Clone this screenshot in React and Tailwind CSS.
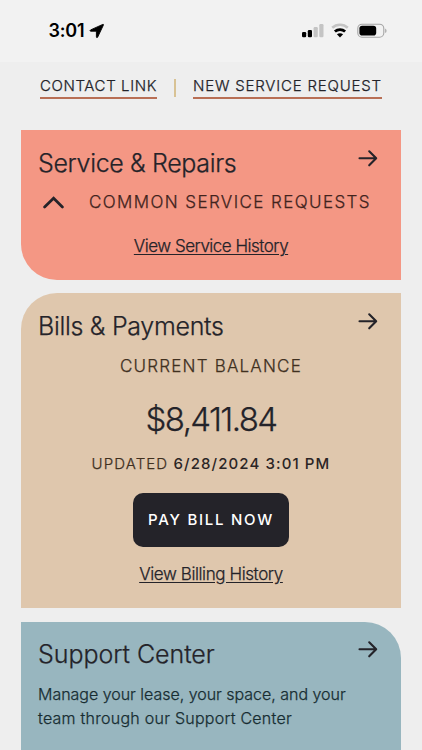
import React from 'react';

const ArrowIcon = () => (
  <svg className="mt-[2px] h-[18px] w-5" viewBox="0 0 20 18" fill="none" stroke="#242329" strokeWidth="2.1" strokeLinecap="round" strokeLinejoin="round">
    <path d="M1.5 9.3H18M11.2 2.3L18.2 9.3L11.2 16.3" />
  </svg>
);

const StatusBar = () => (
  <div className="flex h-[62px] items-start justify-between bg-[#f2f2f2] pl-[48.5px] pr-[34px] text-black">
    <div className="flex pt-[19px]">
      <span className="w-[36px] whitespace-nowrap text-[18px] font-semibold leading-6 tracking-[-0.2px] [-webkit-text-stroke:0px]">3:01</span>
      <svg className="ml-[4px] mt-[4px] h-[16px] w-[16px]" viewBox="0 0 16 16">
        <path
          d="M13.8 1.4L1.6 6.9C.8 7.4 1 8.2 1.8 8.2H7.4V13.8C7.4 14.8 8.3 14.9 8.7 14.1L14.4 2.1C14.6 1.4 14.3 1.2 13.8 1.4Z"
          stroke="#000"
          strokeWidth="0.9"
          strokeLinejoin="round"
        />
      </svg>
    </div>
    <div className="flex items-start pt-[23px]">
      <svg className="h-[16px] w-[22px]" viewBox="0 0 22 16">
        <rect x="0" y="9" width="4.2" height="5.3" rx="1.2" />
        <rect x="5.8" y="7" width="4.2" height="7.3" rx="1.2" />
        <rect x="11.6" y="4" width="4.2" height="10.3" rx="1.2" fill="#c4c4c4" />
        <rect x="17.3" y="1" width="4.2" height="13.3" rx="1.2" fill="#c4c4c4" />
      </svg>
      <svg className="ml-[7px] h-[16px] w-[18px]" viewBox="0 0 18 16" fill="none">
        <path d="M1.2 4.8C5.6.8 12.4.8 16.8 4.8" stroke="#c4c4c4" strokeWidth="2.6" />
        <path d="M3.9 8.5C6.8 5.9 11.2 5.9 14.1 8.5" stroke="#000" strokeWidth="2.8" />
        <path d="M9 14.5L5.9 11.3C7.6 9.9 10.4 9.9 12.1 11.3Z" fill="#000" />
      </svg>
      <svg className="ml-[8px] h-[16px] w-[31px]" viewBox="0 0 31 16">
        <rect x="0.8" y="1.2" width="26" height="13" rx="4.2" fill="none" stroke="#a5a5a5" strokeWidth="1.1" />
        <rect x="2.4" y="2.8" width="16.8" height="9.8" rx="2.8" />
        <path d="M28.2 5.4C30 6.2 30 9.2 28.2 10Z" fill="#a5a5a5" />
      </svg>
    </div>
  </div>
);

const QuickLinks = () => (
  <nav className="flex h-[68px] items-start pl-[40px] pt-[14px] text-[15px] leading-5">
    <a className="h-[23px] w-[117px] whitespace-nowrap border-b-2 border-[#b86f55] tracking-[0.6px]">CONTACT LINK</a>
    <span className="ml-[17px] mt-[3px] h-[18px] w-[2px] bg-[#d8c294]" />
    <a className="ml-[17px] h-[23px] w-[189px] whitespace-nowrap border-b-2 border-[#b86f55] tracking-[0.8px]">NEW SERVICE REQUEST</a>
  </nav>
);

const CardHeader = ({ title, spacing }) => (
  <div className="flex h-8 items-start justify-between pl-[17px] pr-[23px]">
    <h2 className={`whitespace-nowrap text-[25px] leading-8 ${spacing}`}>{title}</h2>
    <ArrowIcon />
  </div>
);

const ServiceCard = () => (
  <section className="h-[150px] rounded-bl-[36px] bg-[#f49784] pt-[16.5px]">
    <CardHeader title="Service & Repairs" spacing="tracking-[-0.35px]" />
    <div className="mt-[11.5px] flex h-6 items-center pl-[21px]">
      <svg className="h-[14px] w-[22px]" viewBox="0 0 22 14" fill="none" stroke="#242329" strokeWidth="2.7" strokeLinecap="round">
        <path d="M2.6 12L11.6 3.2L20.4 12" />
      </svg>
      <span className="ml-[25px] whitespace-nowrap text-[17px] leading-6 tracking-[1.4px] text-[#41231d]">COMMON SERVICE REQUESTS</span>
    </div>
    <div className="mt-[20px] text-center">
      <a className="text-[17px] leading-6 tracking-[-0.5px] underline underline-offset-2">View Service History</a>
    </div>
  </section>
);

const BillsCard = () => (
  <section className="mt-[13px] flex h-[315px] flex-col items-center rounded-tl-[36px] bg-[#dfc7ad] pt-[16.5px]">
    <div className="w-full">
      <CardHeader title="Bills & Payments" spacing="tracking-[-0.3px]" />
    </div>
    <p className="mt-[12.5px] whitespace-nowrap text-[17px] leading-6 tracking-[1.2px] text-[#40301f]">CURRENT BALANCE</p>
    <p className="mt-[21px] whitespace-nowrap text-[33px] leading-10 tracking-[-1.6px]">$8,411.84</p>
    <p className="mt-[15px] whitespace-nowrap text-[15px] leading-5 tracking-[1.1px] text-[#40301f]">
      UPDATED <span className="font-medium text-[#2b2525] [-webkit-text-stroke:0px]">6/28/2024 3:01 PM</span>
    </p>
    <button type="button" className="mt-[19px] h-[53.5px] w-[156px] shrink-0 whitespace-nowrap rounded-[10px] bg-[#242329] text-[15px] font-medium leading-5 tracking-[1.75px] text-white [-webkit-text-stroke:0px]">
      PAY BILL NOW
    </button>
    <a className="mt-[15.5px] whitespace-nowrap text-[17px] leading-6 tracking-[-0.4px] underline underline-offset-2">View Billing History</a>
  </section>
);

const SupportCard = () => (
  <section className="mt-[13.5px] h-[129px] rounded-tr-[36px] bg-[#98b6bf] pt-[16px]">
    <CardHeader title="Support Center" spacing="tracking-[-0.05px]" />
    <div className="mt-[12.5px] whitespace-nowrap pl-[17px] text-[16px] leading-6 text-[#172d32]">
      <p className="tracking-[-0.02px]">Manage your lease, your space, and your</p>
      <p className="tracking-[0.25px]">team through our Support Center</p>
    </div>
  </section>
);

const App = () => {
  return (
    <div className="h-[750px] w-[422px] overflow-hidden bg-[#eeeeee] font-['Inter',sans-serif] font-light text-[#242329] [-webkit-text-stroke:0.25px]">
      <StatusBar />
      <QuickLinks />
      <main className="ml-[21px] w-[380px]">
        <ServiceCard />
        <BillsCard />
        <SupportCard />
      </main>
    </div>
  );
};

export default App;
